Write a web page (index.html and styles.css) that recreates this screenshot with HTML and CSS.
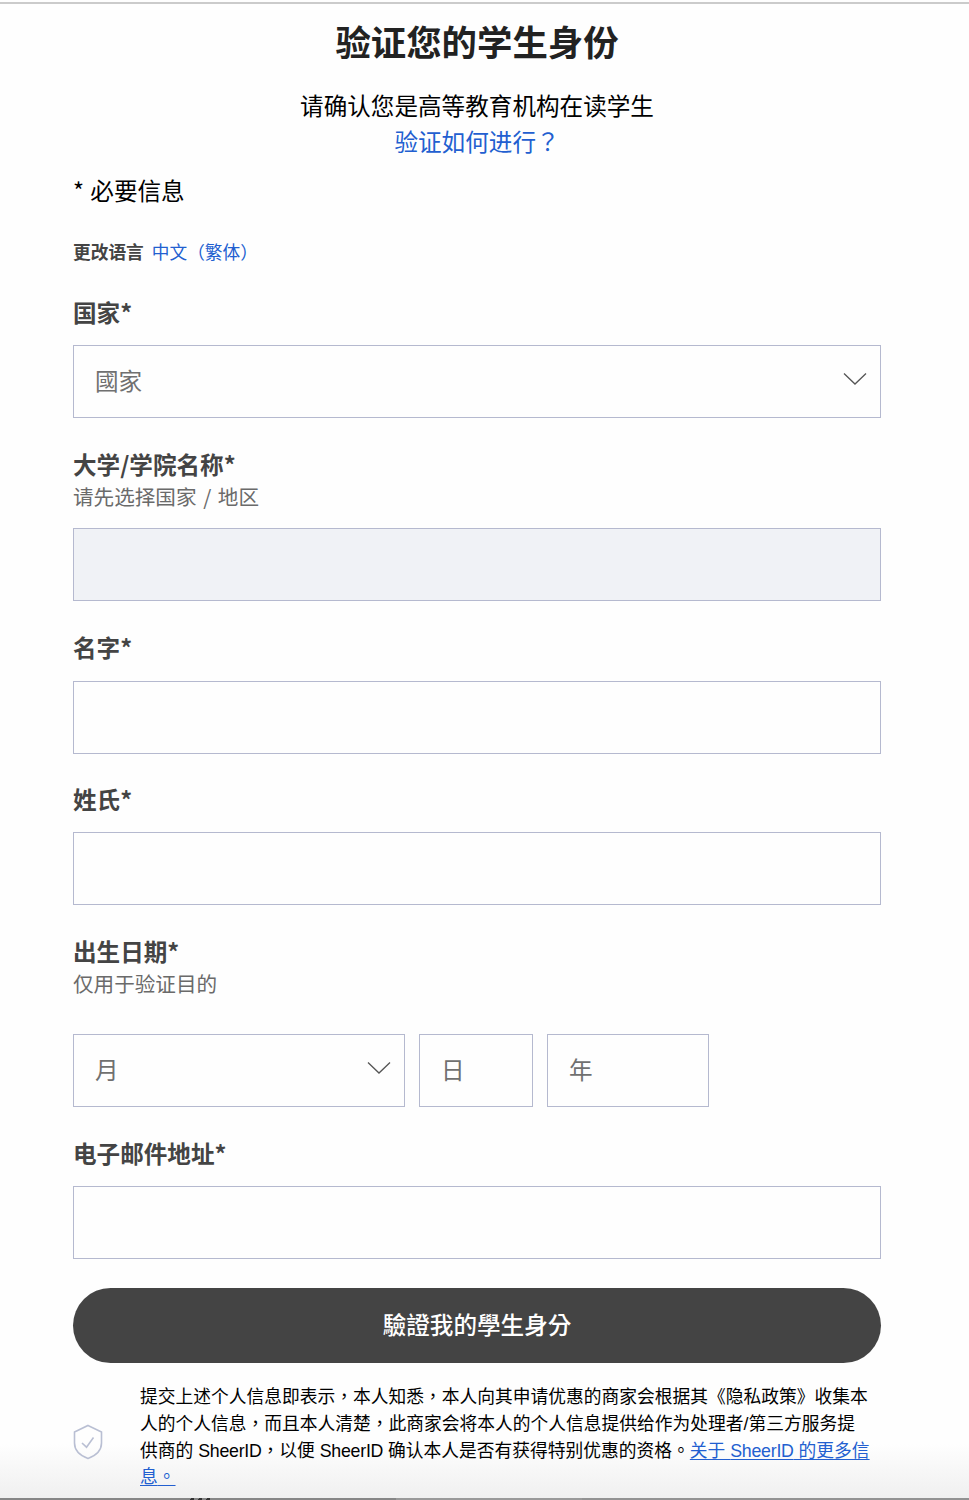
FILE: index.html
```html
<!DOCTYPE html>
<html lang="zh-CN">
<head>
<meta charset="utf-8">
<title>验证您的学生身份</title>
<link rel="stylesheet" href="styles.css">
</head>
<body>
<main class="page">
  <header class="intro">
    <h1 class="title">验证您的学生身份</h1>
    <p class="lead">请确认您是高等教育机构在读学生</p>
    <a class="lead link">验证如何进行<span class="tc" lang="zh-TW">？</span></a>
  </header>
  <p class="required">* 必要信息</p>
  <div class="language"><strong>更改语言</strong><a class="link">中文（繁体）</a></div>

  <form class="form">
    <div class="field">
      <label class="label tight">国家*</label>
      <div class="box select"><span class="tc" lang="zh-TW">國家</span>
        <svg class="chevron" viewBox="0 0 24 14"><path d="M1 1.5 12 12 23 1.5"/></svg></div>
    </div>
    <div class="field">
      <label class="label flush">大学/学院名称*</label>
      <p class="hint">请先选择国家 / 地区</p>
      <div class="box disabled"></div>
    </div>
    <div class="field">
      <label class="label">名字*</label>
      <div class="box"></div>
    </div>
    <div class="field last-name">
      <label class="label tight">姓氏*</label>
      <div class="box"></div>
    </div>
    <div class="field birth">
      <label class="label flush">出生日期*</label>
      <p class="hint">仅用于验证目的</p>
      <div class="dates">
        <div class="box select"><span>月</span>
          <svg class="chevron" viewBox="0 0 24 14"><path d="M1 1.5 12 12 23 1.5"/></svg></div>
        <div class="box">日</div>
        <div class="box">年</div>
      </div>
    </div>
    <div class="field email">
      <label class="label tight">电子邮件地址*</label>
      <div class="box"></div>
    </div>
    <button class="submit tc" type="button" lang="zh-TW">驗證我的學生身分</button>
  </form>

  <footer class="legal">
    <svg class="shield" viewBox="0 0 30 36"><path d="M15 1.5 28.5 8V19C28.5 26.5 23 31.5 15 34.5 7 31.5 1.5 26.5 1.5 19V8Z"/><path d="M9 19 13.5 23.2 20.5 13.5"/></svg>
    <p class="terms">提交上述个人信息即表示<span class="tc" lang="zh-TW">，</span>本人知悉<span class="tc" lang="zh-TW">，</span>本人向其申请优惠的商家会根据其《隐私政策》收集本<br>人的个人信息<span class="tc" lang="zh-TW">，</span>而且本人清楚<span class="tc" lang="zh-TW">，</span>此商家会将本人的个人信息提供给作为处理者/第三方服务提<br>供商的 <span class="brand">SheerID</span><span class="tc" lang="zh-TW">，</span>以便 <span class="brand">SheerID</span> 确认本人是否有获得特别优惠的资格<span class="tc" lang="zh-TW">。</span><a class="link more">关于 <span class="brand">SheerID</span> 的更多信<br>息<span class="tc" lang="zh-TW">。</span></a></p>
  </footer>
</main>
</body>
</html>
```

FILE: styles.css
```css
* { box-sizing: border-box; }

body {
  margin: 0;
  background: #fefefe;
  color: #000;
  font-family: "Noto Sans CJK SC", sans-serif;
  font-size: 23.6px;
  line-height: 36px;
  text-spacing-trim: space-all;
}

h1, p { margin: 0; }

.tc { font-family: "Noto Sans CJK TC", sans-serif; }

.page {
  height: 1500px;
  padding: 15px 88px 0 73px;
  overflow: hidden;
  background:
    linear-gradient(110deg, transparent 20%, #333 20% 60%, transparent 60%) 189px 1498px / 8px 2px no-repeat,
    linear-gradient(110deg, transparent 20%, #333 20% 60%, transparent 60%) 197px 1498px / 8px 2px no-repeat,
    linear-gradient(110deg, transparent 20%, #333 20% 60%, transparent 60%) 205px 1498px / 8px 2px no-repeat,
    linear-gradient(90deg, #868686 0 396px, #999 396px 582px, #929292 582px) 0 1498px / 100% 2px no-repeat,
    linear-gradient(#cbcbcb, #cbcbcb) 0 2px / 100% 2px no-repeat,
    linear-gradient(#fefefe, #efefef) 0 100% / 100% 56px no-repeat,
    #fefefe;
}

.intro {
  display: flex;
  flex-direction: column;
  align-items: center;
}

.title {
  margin-bottom: 20px;
  color: #222;
  font-size: 35.4px;
  line-height: 52px;
}

.link { color: #225fd0; }

.required {
  margin-top: 13px;
  word-spacing: 1px;
}

.language {
  display: flex;
  gap: 8px;
  margin-top: 29px;
  font-size: 17.7px;
  line-height: 28px;
}

.language strong, .label { color: #444; font-weight: 700; }

.form { padding-top: 29px; }

.field { margin-bottom: 28px; }

.label {
  display: block;
  margin-bottom: 16px;
}

.tight { margin-bottom: 15px; }
.flush { margin-bottom: 0; }

.last-name { margin-top: -1px; }

.hint {
  margin-bottom: 18px;
  color: #6a6a6a;
  font-size: 20.6px;
  line-height: 28px;
  word-spacing: 2px;
}

.birth .hint { margin-bottom: 37px; }
.email { margin-bottom: 29px; }

.box {
  display: flex;
  align-items: center;
  height: 73px;
  padding: 0 13px 4px 21px;
  border: 1px solid #b5b9cf;
  color: #707070;
}

.disabled { background: #f0f2f6; }

.select { justify-content: space-between; }

.chevron {
  width: 24px;
  height: 14px;
  margin-top: -1px;
  fill: none;
  stroke: #555;
  stroke-width: 1.3;
}

.dates {
  display: grid;
  grid-template-columns: 332px 114px 162px;
  column-gap: 14px;
}

.submit {
  display: block;
  width: 100%;
  height: 75px;
  padding: 0 0 4px;
  border: 0;
  border-radius: 38px;
  background: #444;
  color: #fff;
  font-size: 23.6px;
  font-weight: 500;
}

.legal {
  display: flex;
  gap: 37px;
  margin-top: 21px;
  white-space: nowrap;
}

.shield {
  flex: none;
  width: 30px;
  height: 36px;
  margin-top: 40px;
  fill: none;
  stroke: #b9bfd3;
  stroke-width: 1.6;
}

.terms {
  font-family: "Liberation Sans", "Noto Sans CJK SC", sans-serif;
  font-size: 17.75px;
  line-height: 26.8px;
}

.terms .tc { line-height: 0; }

.brand { letter-spacing: -0.25px; }

.more {
  text-decoration: underline;
  text-underline-offset: 2px;
}
```
